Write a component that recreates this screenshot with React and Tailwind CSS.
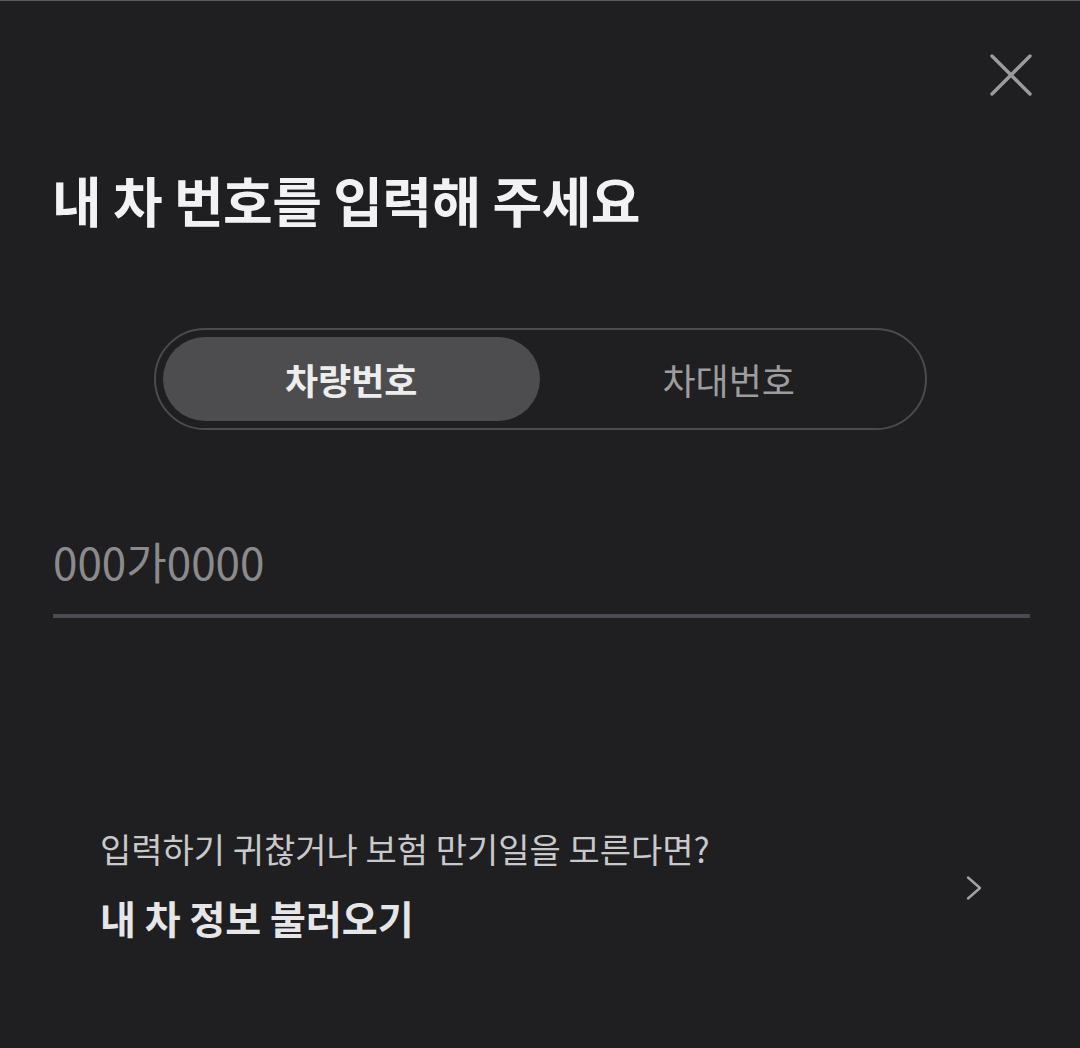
import { useState } from 'react';

const FONT = { fontFamily: '"Noto Sans CJK KR", "Noto Sans", sans-serif' };

const CloseIcon = () => (
  <svg width="46" height="46" viewBox="0 0 46 46" fill="none">
    <path
      d="M4 4L42 42M42 4L4 42"
      stroke="#9b9b9d"
      strokeWidth="3.4"
      strokeLinecap="round"
    />
  </svg>
);

const ChevronRight = () => (
  <svg width="18" height="28" viewBox="0 0 18 28" fill="none" className="mt-[8px]">
    <path
      d="M3 3.5L15 14L3 24.5"
      stroke="#a3a3a6"
      strokeWidth="2.4"
      strokeLinecap="round"
      strokeLinejoin="round"
    />
  </svg>
);

const TABS = ['차량번호', '차대번호'];

const App = () => {
  const [tab, setTab] = useState(0);
  const [plate, setPlate] = useState('');

  return (
    <main
      className="min-h-[1048px] w-[1080px] bg-[#1f1f21] border-t border-[#5a5a5c] flex flex-col"
      style={FONT}
    >
      {/* header */}
      <div className="flex justify-end pt-[51px] pr-[46px]">
        <button type="button" className="w-[46px] h-[46px] flex items-center justify-center">
          <CloseIcon />
        </button>
      </div>

      <h1 className="mt-[70px] px-[52px] text-[54px] leading-[64px] font-bold text-[#f2f2f4] tracking-[-0.5px]">
        내 차 번호를 입력해 주세요
      </h1>

      {/* toggle */}
      <section className="mt-[96px] flex justify-center">
        <div className="w-[773px] h-[102px] rounded-full border-2 border-[#4b4b4e] p-[7px] flex">
          {TABS.map((label, i) => (
            <button
              key={label}
              type="button"
              onClick={() => setTab(i)}
              className={
                'flex-1 rounded-full text-[36px] ' +
                (tab === i
                  ? 'bg-[#4d4d4f] font-bold text-[#ededee]'
                  : 'font-normal text-[#9d9d9f]')
              }
            >
              {label}
            </button>
          ))}
        </div>
      </section>

      {/* plate input */}
      <section className="mt-[101px] pl-[53px] pr-[50px]">
        <input
          type="text"
          value={plate}
          onChange={(e) => setPlate(e.target.value)}
          placeholder="000가0000"
          className="w-full h-[60px] bg-transparent outline-none text-[44px] leading-[60px] text-[#ededee] placeholder:text-[#8b8b8d]"
          style={FONT}
        />
        <div className="mt-[23px] h-[4px] bg-[#4a4b50]" />
      </section>

      {/* load my car info */}
      <button
        type="button"
        className="mt-[209px] ml-[100px] mr-[97px] flex items-center justify-between text-left"
      >
        <div className="flex flex-col">
          <span className="text-[34px] leading-[44px] text-[#c9c9cb]">
            입력하기 귀찮거나 보험 만기일을 모른다면?
          </span>
          <span className="mt-[22px] text-[39px] leading-[48px] font-bold text-[#e6e6e8]">
            내 차 정보 불러오기
          </span>
        </div>
        <ChevronRight />
      </button>
    </main>
  );
};

export default App;
